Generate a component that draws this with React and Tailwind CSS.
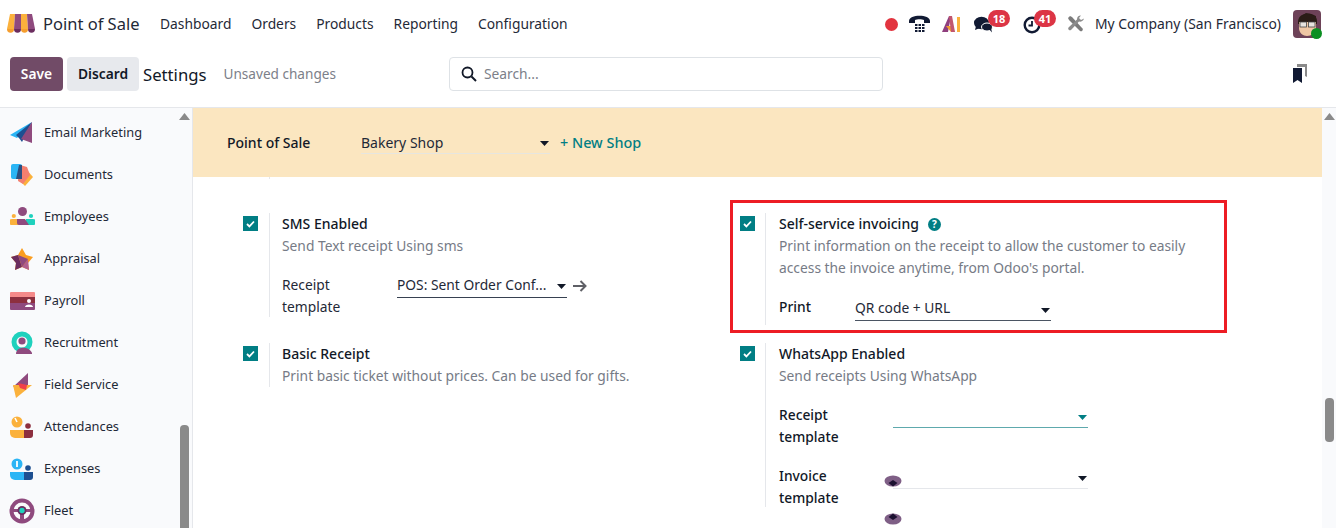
import React from "react";

const Caret = ({ c = "#111827", className = "" }) => (
  <svg width="9" height="5" viewBox="0 0 9 5" className={`shrink-0 ${className}`}><path d="M0 0h9L4.500 5z" fill={c} /></svg>
);

const Check = () => (
  <div className="w-[15px] h-[15px] bg-[#017e84] flex items-center justify-center shrink-0 mt-[3px]">
    <svg width="9" height="8" viewBox="0 0 9 8"><path d="M1 4l2.400 2.400L8 1.500" fill="none" stroke="#fff" strokeWidth="1.800" /></svg>
  </div>
);

const Logo = () => (
  <svg width="28" height="20" viewBox="0 0 28 20">
    <path d="M3 0h5l-1 15H0z" fill="#fbb13c" />
    <path d="M8 0h6v15H7z" fill="#8f4a7e" />
    <path d="M14 0h6l1 15h-7z" fill="#fbb13c" />
    <path d="M20 0h5l3 15h-7z" fill="#8f4a7e" />
    <path d="M0 15h7a3.500 3.800 0 0 1-7 0z" fill="#f59e2e" />
    <path d="M7 15h7a3.500 3.800 0 0 1-7 0z" fill="#6b2d5f" />
    <path d="M14 15h7a3.500 3.800 0 0 1-7 0z" fill="#f59e2e" />
    <path d="M21 15h7a3.500 3.800 0 0 1-7 0z" fill="#6b2d5f" />
  </svg>
);

const icons = {
  email: (
    <svg width="24" height="24" viewBox="0 0 24 24">
      <path d="M0 14L22 1 7 17z" fill="#2bb5f5" />
      <path d="M6 14L22 1 12 21l-3-4z" fill="#1d4f91" />
      <path d="M22 1v21l-11-4z" fill="#8f4a7e" />
    </svg>
  ),
  docs: (
    <svg width="24" height="24" viewBox="0 0 24 24">
      <path d="M15 5l8 9-8 9-7-7z" fill="#fbb13c" />
      <path d="M10 2l7 2 3 8-7 9-5-3z" fill="#f47f6f" />
      <rect x="1" y="1" width="11" height="15" rx="2" fill="#2bb5f5" />
      <path d="M9 2h3v14H6z" fill="#2d4f80" />
    </svg>
  ),
  emp: (
    <svg width="25" height="24" viewBox="0 0 25 24">
      <circle cx="12.500" cy="6.500" r="4.500" fill="#8f4a7e" />
      <circle cx="3.800" cy="11" r="2.100" fill="#fbb13c" />
      <circle cx="21" cy="11" r="2.100" fill="#1fd1bd" />
      <path d="M2 14h7v6H2a3 3 0 0 1 0-6z" fill="#fbb13c" />
      <path d="M16 14h7a3 3 0 0 1 0 6h-7z" fill="#1fd1bd" />
      <path d="M7 14h8l4 6H9a2 2 0 0 1-2-2z" fill="#8f4a7e" />
    </svg>
  ),
  appr: (
    <svg width="24" height="24" viewBox="0 0 24 24">
      <path d="M12 1l4 7 7 2-5 6 1 7-7-3-7 3 1-7-5-6 7-2z" fill="#fb9d1f" />
      <path d="M1 10l7-2 4 12-7 3 1-7z" fill="#6b2d5f" />
      <path d="M12 20l6-8 1 11z" fill="#b0608e" />
      <path d="M8 8l4 12 6-8z" fill="#8f4a7e" />
    </svg>
  ),
  pay: (
    <svg width="25" height="24" viewBox="0 0 25 24">
      <path d="M1 3h23a1 1 0 0 1 1 1v4H0V4a1 1 0 0 1 1-1z" fill="#f58a8a" />
      <rect x="0" y="8" width="25" height="6" fill="#8d2f3f" />
      <path d="M0 14h25v6a1 1 0 0 1-1 1H1a1 1 0 0 1-1-1z" fill="#8f4a7e" />
      <circle cx="19" cy="12" r="2" fill="#fff" />
      <path d="M15 18c0-3.500 8-3.500 8 0z" fill="#fff" />
    </svg>
  ),
  rec: (
    <svg width="24" height="24" viewBox="0 0 24 24">
      <circle cx="12" cy="11" r="8" fill="none" stroke="#1fd1bd" strokeWidth="5" />
      <circle cx="12" cy="10" r="3.600" fill="#8f4a7e" />
      <path d="M6 23c0-8 13-8 16-1v1z" fill="#8f4a7e" />
    </svg>
  ),
  field: (
    <svg width="24" height="26" viewBox="0 0 24 26">
      <path d="M18 1v14H3z" fill="#8f4a7e" />
      <path d="M3 13h19L6 26z" fill="#fbb13c" />
      <path d="M8 11l9 2-1 5-6-2z" fill="#f0404a" />
    </svg>
  ),
  att: (
    <svg width="24" height="24" viewBox="0 0 24 24">
      <circle cx="7" cy="7" r="5.500" fill="#fbb13c" />
      <path d="M7 7L5 3" stroke="#fff" strokeWidth="1.500" />
      <circle cx="18" cy="11" r="2.800" fill="#8d2f3f" />
      <path d="M0 15h14v8H5a5 5 0 0 1-5-5z" fill="#fbb13c" />
      <path d="M14 15h9v5a3 3 0 0 1-3 3h-6z" fill="#8d2f3f" />
    </svg>
  ),
  exp: (
    <svg width="24" height="24" viewBox="0 0 24 24">
      <circle cx="7" cy="7" r="5.500" fill="#2bb5f5" />
      <path d="M7 4v6" stroke="#fff" strokeWidth="1.800" />
      <circle cx="18" cy="11" r="2.800" fill="#1d4f91" />
      <path d="M0 15h14v8H5a5 5 0 0 1-5-5z" fill="#2bb5f5" />
      <path d="M14 15h9v5a3 3 0 0 1-3 3h-6z" fill="#1d4f91" />
    </svg>
  ),
  fleet: (
    <svg width="26" height="26" viewBox="0 0 26 26">
      <circle cx="13" cy="13" r="10.500" fill="none" stroke="#8f4a7e" strokeWidth="4" />
      <path d="M3 11h20v3H3zM11 13h4v10h-4z" fill="#8f4a7e" />
      <circle cx="13" cy="12.500" r="4.500" fill="#6b2d5f" />
      <circle cx="13" cy="12.500" r="2.700" fill="#1fd1bd" />
    </svg>
  ),
};

const apps = [
  ["Email Marketing", icons.email],
  ["Documents", icons.docs],
  ["Employees", icons.emp],
  ["Appraisal", icons.appr],
  ["Payroll", icons.pay],
  ["Recruitment", icons.rec],
  ["Field Service", icons.field],
  ["Attendances", icons.att],
  ["Expenses", icons.exp],
  ["Fleet", icons.fleet],
];

const Badge = ({ n, className }) => (
  <span className={`absolute top-[-6px] h-[17px] w-[22px] rounded-full bg-[#dc3545] text-white text-[11px] font-bold leading-[17px] text-center ${className}`}>{n}</span>
);

const ScrollArrow = () => (
  <svg width="11" height="7" viewBox="0 0 11 7" className="shrink-0"><path d="M5.500 0L11 7H0z" fill="#8a8a8a" /></svg>
);

const Eye = ({ flip }) => (
  <svg width="18" height="12" viewBox="0 0 18 12" className={flip ? "rotate-180" : ""}>
    <ellipse cx="9" cy="6" rx="8.500" ry="5.500" fill="#7f5f86" />
    <path d="M4.500 8L9 5l4.500 3L9 11.500z" fill="#1b1030" />
  </svg>
);

const Setting = ({ title, desc, help, children, extra = "", left }) => (
  <div className="flex items-start">
    <Check />
    <div className={`border-l border-[#e5e7eb] ${left ? "ml-[11px] pl-[12px]" : "ml-[10px] pl-[13px]"} ${extra}`}>
      <div className="flex items-center gap-[9px] font-medium text-[#111827] text-[14px] leading-[22px]">
        {title}
        {help && (
          <span className="w-[13px] h-[13px] rounded-full bg-[#017e84] text-white text-[10px] font-bold leading-[13px] text-center">?</span>
        )}
      </div>
      <div className="text-[#767b86] leading-[22px] w-[430px]">{desc}</div>
      {children}
    </div>
  </div>
);

export default function App() {
  return (
    <div className="w-[1336px] h-[528px] overflow-hidden bg-white flex flex-col text-[13.800px] text-[#1f2937] font-['Noto_Sans',sans-serif]">
      {/* navbar */}
      <div className="h-[48px] flex items-center shrink-0 relative">
        <div className="ml-[7px] w-[28px] flex"><Logo /></div>
        <div className="ml-[8px] text-[16.500px] w-[97px] whitespace-nowrap">Point of Sale</div>
        <nav className="ml-[20px] flex gap-[20px]">
          <span>Dashboard</span><span>Orders</span><span>Products</span><span>Reporting</span><span>Configuration</span>
        </nav>
        <div className="ml-auto flex items-center">
          <span className="w-[13px] h-[13px] rounded-full bg-[#e2343f]" />
          <svg width="21" height="20" viewBox="0 0 21 20" className="ml-[11px]">
            <path d="M0 7c0-7 21-7 21 0v2h-6V6c-2-1-7-1-9 0v3H0z" fill="#111a33" />
            <g fill="#111a33">
              <rect x="6" y="10" width="2.500" height="2" /><rect x="9.500" y="10" width="2.500" height="2" /><rect x="13" y="10" width="2.500" height="2" />
              <rect x="6" y="13" width="2.500" height="2" /><rect x="9.500" y="13" width="2.500" height="2" /><rect x="13" y="13" width="2.500" height="2" />
              <rect x="6" y="16" width="2.500" height="2" /><rect x="9.500" y="16" width="2.500" height="2" /><rect x="13" y="16" width="2.500" height="2" />
            </g>
          </svg>
          <svg width="18" height="16" viewBox="0 0 18 16" className="ml-[12px]">
            <path d="M0 16L7 0h2l-3 16z" fill="#8f3f7e" />
            <path d="M4 10h6l3 6H9z" fill="#f59e2e" />
            <path d="M7 0h3l3 16H9z" fill="#c2566f" />
            <rect x="15" y="1" width="3" height="15" fill="#fbb13c" />
          </svg>
          <span className="relative ml-[14px] w-[19px] h-[17px] flex">
            <svg width="19" height="17" viewBox="0 0 19 17">
              <ellipse cx="7.500" cy="7" rx="7.500" ry="6.200" fill="#111a33" />
              <path d="M2 10l-1 4 5-2z" fill="#111a33" />
              <ellipse cx="13" cy="11" rx="5.500" ry="4" fill="#111a33" stroke="#fff" strokeWidth="1" />
              <path d="M15 13l3 3.500-1-4.500z" fill="#111a33" />
            </svg>
            <Badge n="18" className="left-[14px]" />
          </span>
          <span className="relative ml-[30px] w-[18px] h-[17px] flex">
            <svg width="18" height="18" viewBox="0 0 18 18">
              <circle cx="9" cy="9" r="7.300" fill="none" stroke="#111a33" strokeWidth="2.400" />
              <path d="M9 5v4.500H5.500" fill="none" stroke="#111a33" strokeWidth="1.800" />
            </svg>
            <Badge n="41" className="left-[11px]" />
          </span>
          <svg width="18" height="18" viewBox="0 0 18 18" className="ml-[26px]">
            <path d="M1 3l2-2 2 1 10.500 11.500a1.800 1.800 0 0 1-2.500 2.500L2 5z" fill="#7b7b7b" />
            <path d="M17 3.500a4 4 0 0 1-5 3L4 15a1.800 1.800 0 0 1-2.500-2.500L10 4.500a4 4 0 0 1 4-4l-2 2.500 2 2z" fill="#8c8c8c" />
          </svg>
          <span className="ml-[10px] text-[13.900px] whitespace-nowrap">My Company (San Francisco)</span>
          <span className="relative ml-[12px] mr-[15px] w-[28px] h-[28px] flex">
            <svg width="28" height="28" viewBox="0 0 28 28">
              <rect width="28" height="28" rx="4" fill="#6d4258" />
              <path d="M5 12C5 1 24 1 24 11v3H5z" fill="#2a1c16" />
              <path d="M6 12h17v6c0 5-5 8-9 8s-8-3-8-8z" fill="#efc7a4" />
              <path d="M6 8l7-5 10 3v5l-6-3z" fill="#2a1c16" />
              <rect x="7" y="12" width="6.500" height="5" fill="#e8e4df" stroke="#444" strokeWidth=".8" />
              <rect x="15.500" y="12" width="6.500" height="5" fill="#e8e4df" stroke="#444" strokeWidth=".8" />
            </svg>
            <span className="absolute right-[-1px] bottom-[-1px] w-[11px] h-[11px] rounded-full bg-[#0b8f22]" />
          </span>
        </div>
      </div>

      {/* control panel */}
      <div className="h-[60px] shrink-0 flex items-start pt-[9px] border-b border-[#e5e7eb]">
        <button className="ml-[10px] w-[53px] h-[34px] rounded-[4px] bg-[#714b67] text-white font-semibold">Save</button>
        <button className="ml-[4px] w-[72px] h-[34px] rounded-[4px] bg-[#e7e9ed] text-[#111827] font-semibold">Discard</button>
        <span className="ml-[4px] text-[16.700px] leading-[36px] text-[#111827]">Settings</span>
        <span className="ml-[17px] text-[13.600px] leading-[34px] text-[#7c8089]">Unsaved changes</span>
        <div className="ml-[113px] w-[434px] h-[34px] border border-[#dee2e6] rounded-[4px] flex items-center pl-[11px]">
          <svg width="16" height="16" viewBox="0 0 16 16"><circle cx="6.500" cy="6.500" r="5" fill="none" stroke="#111827" strokeWidth="1.800" /><path d="M10.500 10.500L15 15" stroke="#111827" strokeWidth="2" /></svg>
          <span className="ml-[7px] text-[#7c8089]">Search...</span>
        </div>
        <svg width="16" height="19" viewBox="0 0 16 19" className="ml-[409px] mt-[7px]">
          <path d="M5 0h10v13l-2-1V3H5z" fill="#8a8a8a" />
          <path d="M1 4h9v15l-4.500-3L1 19z" fill="#111a33" />
        </svg>
      </div>

      <div className="flex flex-1 min-h-0">
        {/* sidebar */}
        <aside className="w-[193px] shrink-0 bg-[#f9fafc] border-r border-[#e5e7eb] flex overflow-hidden">
          <div className="w-[179px] pt-[4px]">
            {apps.map(([name, icon]) => (
              <div key={name} className="h-[42px] flex items-center text-[#1f2937] text-[12.800px]">
                <span className="ml-[10px] w-[24px] flex items-center justify-center shrink-0 [&>svg]:shrink-0">{icon}</span>
                <span className="ml-[10px] whitespace-nowrap">{name}</span>
              </div>
            ))}
          </div>
          <div className="w-[11px] flex flex-col items-center pt-[5px]">
            <ScrollArrow />
            <div className="mt-[305px] w-[9px] h-[110px] rounded-[4px] bg-[#8a8a8a] shrink-0" />
          </div>
        </aside>

        {/* main */}
        <main className="flex-1 min-w-0 relative overflow-hidden">
          <div className="h-[69px] bg-[#fbe6c0] flex items-center pl-[34px]">
            <span className="w-[134px] font-medium text-[#111827] text-[14px]">Point of Sale</span>
            <div className="w-[189px] h-[22px] border-b border-[#e6e6e0] flex items-center justify-between pr-[1px] mt-[1px]">
              <span className="text-[14px]">Bakery Shop</span><Caret className="translate-y-px" />
            </div>
            <span className="ml-[10px] text-[#017e84] font-medium text-[14.400px]">+ New Shop</span>
          </div>
          <div className="ml-[76px] w-px h-[2px] bg-[#e5e7eb]" />
          <div className="pt-[34px] pl-[50px] grid grid-cols-[497px_497px] grid-rows-[130px_auto]">
            <Setting left title="SMS Enabled" desc="Send Text receipt Using sms" extra="h-[104px]">
              <div className="flex mt-[17px]">
                <div className="w-[115px] leading-[22px]">Receipt<br />template</div>
                <div className="flex items-start">
                  <div className="w-[170px] h-[24px] border-b border-[#374151] flex items-center justify-between pr-[1px]">
                    <span className="whitespace-nowrap">POS: Sent Order Conf...</span><Caret className="translate-y-px" />
                  </div>
                  <svg width="14" height="12" viewBox="0 0 14 12" className="ml-[6px] mt-[6px]"><path d="M0 6h12M7.500 1l5 5-5 5" fill="none" stroke="#5f6066" strokeWidth="2" /></svg>
                </div>
              </div>
            </Setting>
            <Setting title="Self-service invoicing" help desc="Print information on the receipt to allow the customer to easily access the invoice anytime, from Odoo's portal." extra="h-[112px]">
              <div className="flex mt-[17px]">
                <div className="w-[76px] font-medium text-[#111827] leading-[22px]">Print</div>
                <div className="w-[196px] h-[25px] border-b border-[#4b5563] flex items-center justify-between pr-[1px]">
                  <span>QR code + URL</span><Caret className="translate-y-[2px]" />
                </div>
              </div>
            </Setting>
            <Setting left title="Basic Receipt" desc="Print basic ticket without prices. Can be used for gifts." />
            <Setting title="WhatsApp Enabled" desc="Send receipts Using WhatsApp" extra="h-[164px]">
              <div className="flex mt-[17px] font-medium text-[#111827] leading-[22px]">
                <div className="w-[114px]">Receipt<br />template</div>
                <div className="w-[195px] h-[24px] border-b border-[#5ea9ad] flex items-center justify-end pr-[1px]"><Caret c="#017e84" className="translate-y-[2px]" /></div>
              </div>
              <div className="flex mt-[17px] font-medium text-[#111827] leading-[22px]">
                <div className="w-[114px]">Invoice<br />template</div>
                <div className="relative w-[195px] h-[24px] border-b border-[#e5e7eb] flex items-center justify-end pr-[1px]">
                  <Caret className="translate-y-[2px]" />
                  <span className="absolute left-[-9px] top-[10px] flex"><Eye /></span>
                  <span className="absolute left-[-9px] top-[48px] flex"><Eye flip /></span>
                </div>
              </div>
            </Setting>
          </div>

          {/* annotation box */}
          <div className="absolute left-[537px] top-[92px] w-[497px] h-[133px] border-[3px] border-[#ed1c24]" />

          {/* scrollbar */}
          <div className="absolute right-0 top-0 bottom-0 w-[14px] bg-[#f9fafc] flex flex-col items-center pt-[5px] pl-[1px]">
            <ScrollArrow />
            <div className="mt-[278px] w-[9px] h-[44px] rounded-[4px] bg-[#8a8a8a]" />
          </div>
        </main>
      </div>
    </div>
  );
}
